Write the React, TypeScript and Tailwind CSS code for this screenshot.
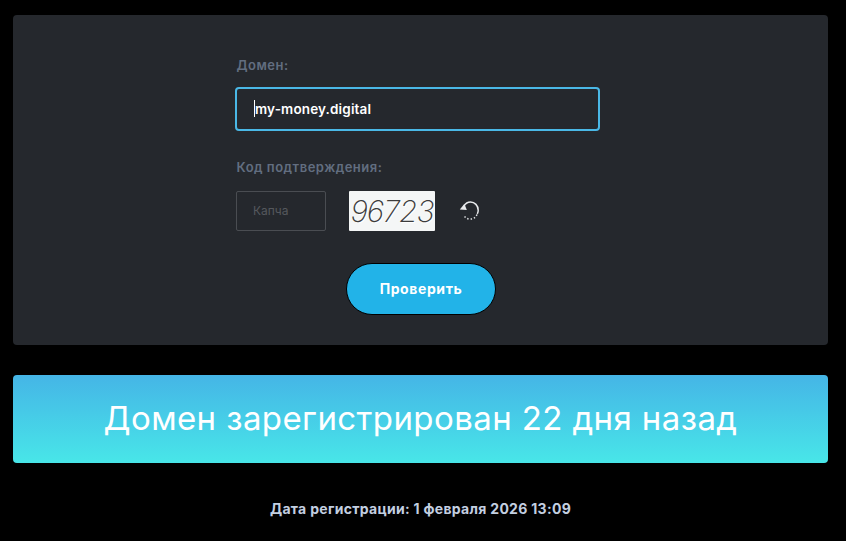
const font = "font-['Inter','Noto_Sans',sans-serif]";

// Circular arrow next to the captcha
const RefreshIcon = () => (
  <svg width="24" height="24" viewBox="0 0 24 24" fill="none" stroke="#e8eaec" strokeWidth="1.5">
    <path d="M6 7C7.5 4.4 9.8 3 12.5 3c4.2 0 7.7 3.6 7.7 8.2 0 1.3-.3 2.5-.9 3.6" />
    <path d="M19 15.5c-1.4 3-3.8 4.6-6.8 4.6-2.9 0-5.2-1.4-6.7-4.1" strokeDasharray="1.4 2" />
    <path d="M1.8 10.6 L6.4 4.8 L8.8 11 Z" fill="#e8eaec" stroke="none" />
  </svg>
);

export default function App() {
  return (
    <div className={`min-h-screen bg-black pt-[15px] pr-[18px] pl-[13px] ${font}`}>
      <div className="h-[330px] rounded-[4px] bg-[#25282d] pt-[42px] pl-[222px]">
        <div className="w-[365px]">
          <div className="pl-[1.5px] text-[13px] leading-[16px] font-semibold tracking-[0.5px] text-[#626e80]">Домен:</div>
          <div className="mt-[14px] flex h-[44px] items-center rounded-[4px] border-2 border-[#4ab8e6] pl-[18px]">
            <span className="relative text-[13.5px] font-semibold tracking-[0.15px] text-white">
              <span className="absolute top-[1px] left-[-1px] h-[17px] w-px bg-white" />
              my-money.digital
            </span>
          </div>
          <div className="mt-[28px] pl-[1.5px] text-[13px] leading-[16px] font-semibold tracking-[0.5px] text-[#626e80]">Код подтверждения:</div>
          <div className="mt-[16px] flex items-center pl-[1px]">
            <div className="flex h-[40px] w-[90px] items-center rounded-[2px] border border-[#4a4d52] pl-[16px] text-[12px] text-[#55585d]">
              Капча
            </div>
            <div className="ml-[23px] flex h-[40px] w-[86px] items-center justify-center rounded-[1px] bg-[#f4f6f6] text-[30px] font-extralight tracking-[-1px] text-[#3c3c3c] italic [text-shadow:1px_1px_0_#ffffff]">
              96723
            </div>
            <div className="ml-[23px] flex items-center">
              <RefreshIcon />
            </div>
          </div>
          <div className="mt-[32px] flex justify-center pl-[7px]">
            <button className="h-[52px] w-[150px] rounded-full border border-black bg-[#22b3e8] pb-[2px] text-[14px] font-bold tracking-[0.6px] text-white">
              Проверить
            </button>
          </div>
        </div>
      </div>
      <div className="mt-[30px] flex h-[88px] items-center justify-center rounded-[4px] bg-gradient-to-b from-[#45b5e6] to-[#48e6e8] text-[33px] font-normal tracking-[0.4px] text-white">
        Домен зарегистрирован 22 дня назад
      </div>
      <div className="mt-[36px] text-center text-[14px] leading-[20px] font-bold tracking-[0.3px] text-[#c3cfe0]">
        Дата регистрации: 1 февраля 2026 13:09
      </div>
    </div>
  );
}
